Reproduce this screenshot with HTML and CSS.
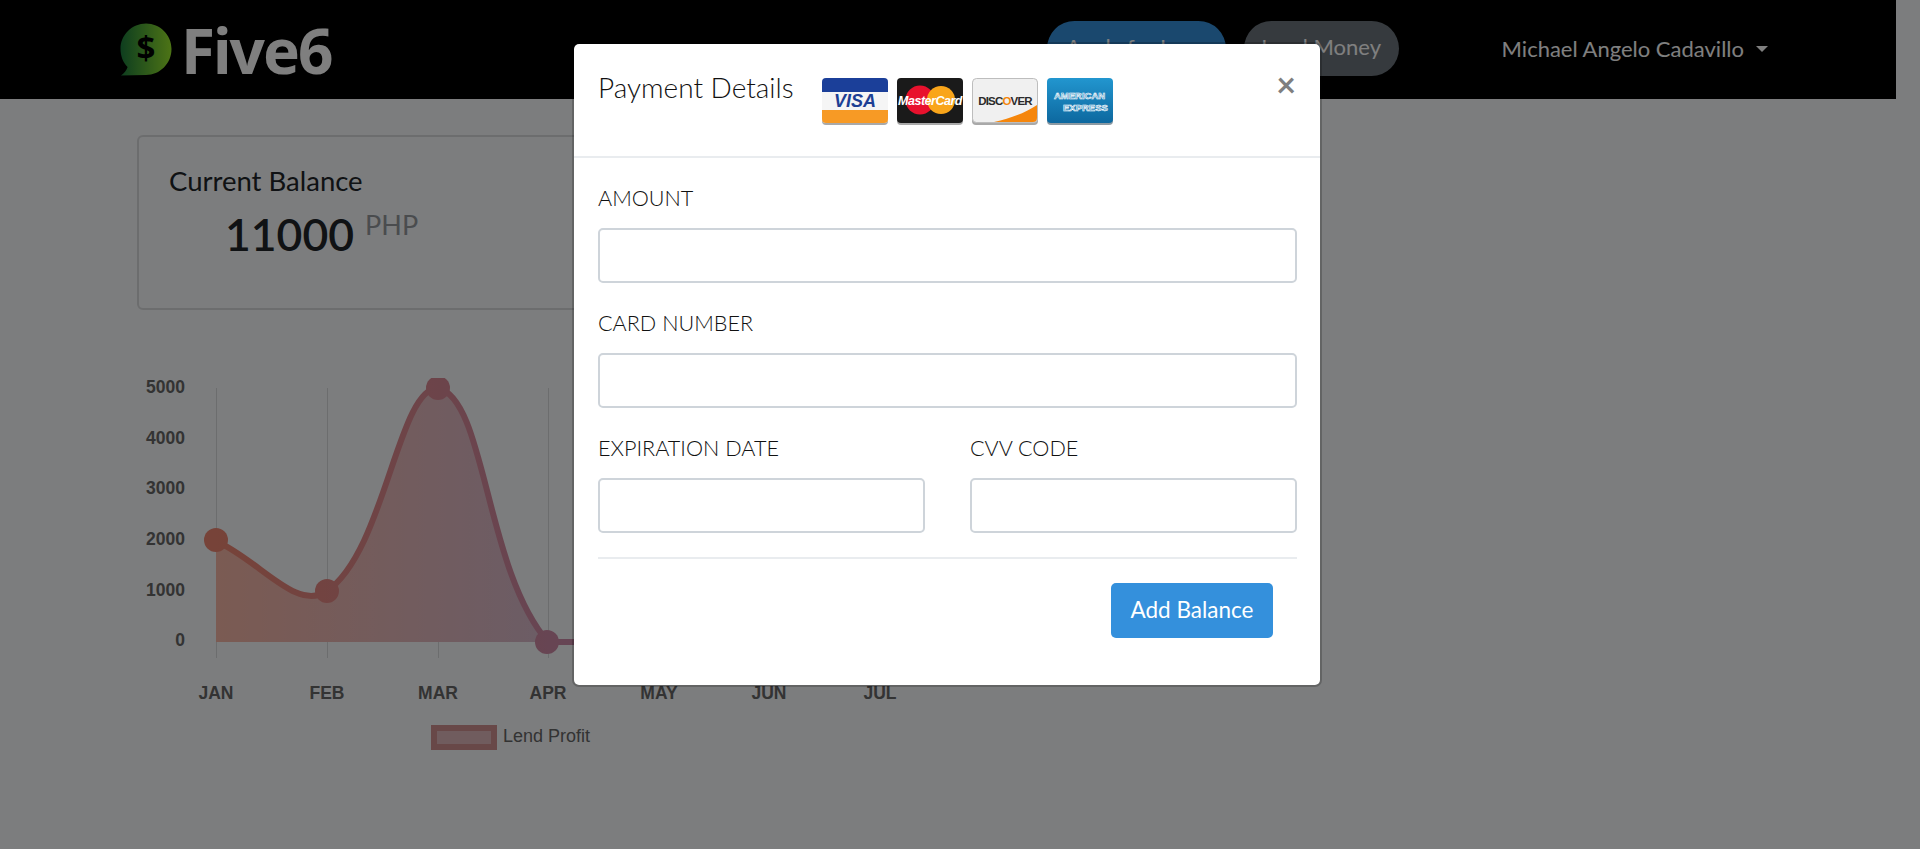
FILE: index.html
```html
<!DOCTYPE html>
<html lang="en">
<head>
    <meta charset="UTF-8">
    <meta name="viewport" content="width=device-width, initial-scale=1.0">
    <title>Five6 - Payment Details</title>
    <link rel="stylesheet" href="styles.css">
</head>
<body>
    <nav class="navbar">
        <a class="brand" href="#">
            <svg class="brand-icon" width="52" height="53" viewBox="0 0 52 53">
                <defs>
                    <linearGradient id="bubbleFill" x1="0" y1="0" x2="1" y2="0">
                        <stop offset="0" stop-color="#1c7c3e"/>
                        <stop offset="1" stop-color="#9ae82c"/>
                    </linearGradient>
                </defs>
                <path d="M26 0.5C40 0.5 51.5 11.8 51.5 26C51.5 40.5 40 52 26 52L1 52.5C4 50.5 6.5 47.5 7.6 44C3 39.4 0.5 33 0.5 26C0.5 11.8 12 0.5 26 0.5Z" fill="url(#bubbleFill)"/>
                <text class="brand-dollar" x="26" y="37" text-anchor="middle">$</text>
            </svg>
            <span class="brand-name">Five6</span>
        </a>
        <div class="nav-actions">
            <a class="pill pill-primary" href="#">Apply for Loan</a>
            <a class="pill pill-secondary" href="#">Lend Money</a>
        </div>
        <a class="nav-user" href="#">Michael Angelo Cadavillo<span class="caret"></span></a>
    </nav>

    <main class="content">
        <section class="balance-card">
            <h2 class="balance-title">Current Balance</h2>
            <div class="balance-amount">
                <span class="balance-value">11000</span>
                <span class="balance-unit">PHP</span>
            </div>
        </section>

        <svg class="chart" width="760" height="385" viewBox="138 378 760 385">
            <defs>
                <linearGradient id="lineStroke" gradientUnits="userSpaceOnUse" x1="216" y1="0" x2="880" y2="0">
                    <stop offset="0" stop-color="#ee8672"/>
                    <stop offset="0.5" stop-color="#cf8aa6"/>
                    <stop offset="1" stop-color="#aa92d4"/>
                </linearGradient>
                <linearGradient id="areaFill" gradientUnits="userSpaceOnUse" x1="216" y1="0" x2="880" y2="0">
                    <stop offset="0" stop-color="#f6b6a6"/>
                    <stop offset="0.5" stop-color="#d8bacc"/>
                    <stop offset="1" stop-color="#c0bee4"/>
                </linearGradient>
            </defs>

            <g class="grid-lines">
                <line x1="216.5" y1="388" x2="216.5" y2="658"/>
                <line x1="327.5" y1="388" x2="327.5" y2="658"/>
                <line x1="438.5" y1="388" x2="438.5" y2="658"/>
                <line x1="548.5" y1="388" x2="548.5" y2="658"/>
                <line x1="659.5" y1="388" x2="659.5" y2="658"/>
                <line x1="770.5" y1="388" x2="770.5" y2="658"/>
                <line x1="880.5" y1="388" x2="880.5" y2="658"/>
            </g>

            <path fill="url(#areaFill)" d="M216 541C260.4 561 296.4 612.1 327 591C385.2 550.9 397.8 388 438 388C486.2 399.1 484.8 569.4 548 642L880 642L216 642Z"/>
            <path fill="none" stroke="url(#lineStroke)" stroke-width="6" d="M216 541C260.4 561 296.4 612.1 327 591C385.2 550.9 397.8 388 438 388C486.2 399.1 484.8 569.4 548 642L880 642"/>

            <g fill="url(#lineStroke)">
                <circle cx="216" cy="540" r="12"/>
                <circle cx="327" cy="591" r="12"/>
                <circle cx="438" cy="388" r="12"/>
                <circle cx="547" cy="642" r="12"/>
            </g>

            <g class="axis-y">
                <text x="185" y="393">5000</text>
                <text x="185" y="444">4000</text>
                <text x="185" y="494">3000</text>
                <text x="185" y="545">2000</text>
                <text x="185" y="596">1000</text>
                <text x="185" y="646">0</text>
            </g>
            <g class="axis-x">
                <text x="216" y="699">JAN</text>
                <text x="327" y="699">FEB</text>
                <text x="438" y="699">MAR</text>
                <text x="548" y="699">APR</text>
                <text x="659" y="699">MAY</text>
                <text x="769" y="699">JUN</text>
                <text x="880" y="699">JUL</text>
            </g>

            <rect class="legend-box" x="434" y="728" width="60" height="19"/>
            <text class="legend-text" x="503" y="742">Lend Profit</text>
        </svg>
    </main>

    <div class="modal-backdrop"></div>

    <div class="modal">
        <div class="modal-content">
            <header class="modal-header">
                <h3 class="modal-title">Payment Details</h3>
                <div class="card-logos">
                    <svg class="card-logo" width="66" height="47" viewBox="0 0 66 47">
                        <rect y="2" width="66" height="45" rx="4" fill="#a9a9a9"/>
                        <rect width="66" height="45" rx="4" fill="#f5f5f5"/>
                        <path d="M0 14V4a4 4 0 0 1 4-4H62a4 4 0 0 1 4 4V14Z" fill="#1b3f99"/>
                        <path d="M0 32H66V41a4 4 0 0 1-4 4H4a4 4 0 0 1-4-4Z" fill="#f79a25"/>
                        <text class="logo-visa" x="33" y="29" text-anchor="middle">VISA</text>
                    </svg>
                    <svg class="card-logo" width="66" height="47" viewBox="0 0 66 47">
                        <rect y="2" width="66" height="45" rx="4" fill="#a9a9a9"/>
                        <rect width="66" height="45" rx="4" fill="#1a1a1a"/>
                        <circle cx="23" cy="22" r="14.5" fill="#e8112d"/>
                        <circle cx="44" cy="22" r="14" fill="#f9a51a"/>
                        <text class="logo-mc" x="33" y="27" text-anchor="middle">MasterCard</text>
                    </svg>
                    <svg class="card-logo" width="66" height="47" viewBox="0 0 66 47">
                        <rect y="2" width="66" height="45" rx="4" fill="#a9a9a9"/>
                        <rect x="0.5" y="0.5" width="65" height="44" rx="4" fill="#f0f0f0" stroke="#bdbdbd"/>
                        <path d="M22 44C40 40 55 34 65 27V40a4 4 0 0 1-4 4Z" fill="#f5860c"/>
                        <text class="logo-discover" x="33" y="27" text-anchor="middle">DISC<tspan class="logo-discover-o">O</tspan>VER</text>
                    </svg>
                    <svg class="card-logo" width="66" height="47" viewBox="0 0 66 47">
                        <defs>
                            <linearGradient id="amexFill" x1="0" y1="0" x2="0" y2="1">
                                <stop offset="0" stop-color="#2296cf"/>
                                <stop offset="1" stop-color="#0d689f"/>
                            </linearGradient>
                        </defs>
                        <rect y="2" width="66" height="45" rx="4" fill="#8c9aa3"/>
                        <rect width="66" height="45" rx="4" fill="url(#amexFill)"/>
                        <text class="logo-amex" x="7" y="21">AMERICAN</text>
                        <text class="logo-amex" x="16" y="33">EXPRESS</text>
                    </svg>
                </div>
                <button class="close" type="button">&times;</button>
            </header>

            <form class="modal-body">
                <div class="form-group">
                    <label class="form-label">AMOUNT</label>
                    <input class="form-input" type="text">
                </div>
                <div class="form-group">
                    <label class="form-label">CARD NUMBER</label>
                    <input class="form-input" type="text">
                </div>
                <div class="form-row">
                    <div class="form-group">
                        <label class="form-label">EXPIRATION DATE</label>
                        <input class="form-input" type="text">
                    </div>
                    <div class="form-group">
                        <label class="form-label">CVV CODE</label>
                        <input class="form-input" type="text">
                    </div>
                </div>
                <hr class="form-divider">
                <div class="form-footer">
                    <button class="btn-submit" type="button">Add Balance</button>
                </div>
            </form>
        </div>
    </div>
</body>
</html>
```

FILE: styles.css
```css
* {
    box-sizing: border-box;
}

html, body {
    margin: 0;
    padding: 0;
    height: 849px;
    overflow: hidden;
}

body {
    position: relative;
    padding-right: 24px;
    background-color: #f8fafc;
    color: #212529;
    font-family: "Lato", "Open Sans", sans-serif;
    font-size: 22px;
}

/* navbar */
.navbar {
    display: flex;
    align-items: center;
    height: 99px;
    padding: 0 128px 0 120px;
    background-color: #000;
}

.brand {
    display: flex;
    align-items: center;
    gap: 9px;
    color: #fff;
    text-decoration: none;
}

.brand-dollar {
    font-family: "Noto Sans", sans-serif;
    font-size: 33px;
    font-weight: 700;
    fill: #000;
}

.brand-name {
    font-family: "Noto Sans", sans-serif;
    font-size: 62px;
    font-weight: 700;
    letter-spacing: -2px;
    line-height: 1;
}

.nav-actions {
    display: flex;
    gap: 18px;
    margin: 0 0 2px auto;
}

.pill {
    display: flex;
    align-items: center;
    justify-content: center;
    height: 55px;
    padding-bottom: 4px;
    border-radius: 28px;
    color: #fff;
    text-decoration: none;
}

.pill-primary {
    width: 179px;
    background-color: #3490dc;
}

.pill-secondary {
    width: 155px;
    background-color: #6c757d;
}

.nav-user {
    display: flex;
    align-items: center;
    margin: 0 0 2px 103px;
    color: #fff;
    text-decoration: none;
}

.caret {
    width: 0;
    height: 0;
    margin-left: 12px;
    border-top: 6px solid #fff;
    border-left: 6px solid transparent;
    border-right: 6px solid transparent;
}

/* page */
.content {
    padding: 36px 0 0 137px;
}

.balance-card {
    width: 700px;
    height: 175px;
    padding: 26px 30px 0;
    border: 2px solid rgba(0, 0, 0, 0.125);
    border-radius: 6px;
}

.balance-title {
    margin: 0;
    font-size: 27.5px;
    font-weight: 400;
    line-height: 36px;
}

.balance-amount {
    display: flex;
    align-items: flex-start;
    gap: 11px;
    margin: 7px 0 0 56px;
}

.balance-value {
    font-size: 44.5px;
    font-weight: 600;
    line-height: 56px;
}

.balance-unit {
    color: #94989c;
    font-size: 27px;
    line-height: 38px;
}

.chart {
    display: block;
    margin: 68px 0 0 1px;
}

.chart text {
    font-family: "Liberation Sans", sans-serif;
    font-size: 17.5px;
    fill: #666;
}

.grid-lines line {
    stroke: rgba(0, 0, 0, 0.12);
    stroke-width: 1;
}

.axis-y text {
    font-weight: 700;
    text-anchor: end;
}

.axis-x text {
    font-weight: 700;
    text-anchor: middle;
}

.legend-box {
    fill: #e0b8bc;
    stroke: #d09090;
    stroke-width: 6;
}

.chart .legend-text {
    font-size: 18px;
}

/* modal */
.modal-backdrop {
    position: absolute;
    inset: 0;
    background-color: rgba(0, 0, 0, 0.5);
}

.modal {
    position: absolute;
    inset: 0;
    display: flex;
    justify-content: center;
    align-items: flex-start;
    padding: 42px 26px 0 0;
}

.modal-content {
    width: 750px;
    border: 2px solid rgba(0, 0, 0, 0.2);
    border-radius: 7px;
    background-color: #fff;
    background-clip: padding-box;
}

.modal-header {
    display: flex;
    align-items: flex-start;
    height: 114px;
    padding: 24px 24px 0;
    border-bottom: 2px solid #e9ecef;
}

.modal-title {
    margin: 0;
    color: #111;
    font-size: 28px;
    font-weight: 300;
    line-height: 38px;
}

.card-logos {
    display: flex;
    gap: 9px;
    margin: 10px 0 0 28px;
}

.logo-visa {
    font-family: "Liberation Sans", sans-serif;
    font-size: 18px;
    font-style: italic;
    font-weight: 700;
    fill: #1d3f94;
}

.logo-mc {
    font-family: "Liberation Sans", sans-serif;
    font-size: 12.5px;
    font-style: italic;
    font-weight: 700;
    letter-spacing: -0.5px;
    fill: #fff;
}

.logo-discover {
    font-family: "Liberation Sans", sans-serif;
    font-size: 11.5px;
    font-weight: 700;
    letter-spacing: -0.8px;
    fill: #2a2a2a;
}

.logo-discover-o {
    fill: #f5860c;
}

.logo-amex {
    font-family: "Liberation Sans", sans-serif;
    font-size: 9.5px;
    font-weight: 700;
    fill: #2a86bd;
    stroke: #fff;
    stroke-width: 0.6px;
}

.close {
    margin: -1px 0 0 auto;
    padding: 0;
    border: 0;
    background: none;
    color: #7f7f7f;
    font-family: "Lato", sans-serif;
    font-size: 34px;
    font-weight: 700;
    line-height: 34px;
}

.modal-body {
    display: flex;
    flex-direction: column;
    gap: 23px;
    padding: 23px 23px 47px 24px;
}

.form-group {
    display: flex;
    flex-direction: column;
    gap: 13px;
}

.form-row {
    display: grid;
    grid-template-columns: 327px 327px;
    gap: 45px;
}

.form-label {
    color: #111;
    font-size: 21.6px;
    font-weight: 300;
    line-height: 34px;
}

.form-input {
    width: 100%;
    height: 55px;
    border: 2px solid #ced4da;
    border-radius: 5px;
    background-color: #fff;
}

.form-divider {
    width: 100%;
    height: 2px;
    margin: 1px 0;
    border: 0;
    background-color: #e9ecef;
}

.form-footer {
    display: flex;
    justify-content: flex-end;
    padding-right: 24px;
}

.btn-submit {
    width: 162px;
    height: 55px;
    padding-bottom: 4px;
    border: 0;
    border-radius: 5px;
    background-color: #3490dc;
    color: #fff;
    font-family: inherit;
    font-size: 22.5px;
}
```
